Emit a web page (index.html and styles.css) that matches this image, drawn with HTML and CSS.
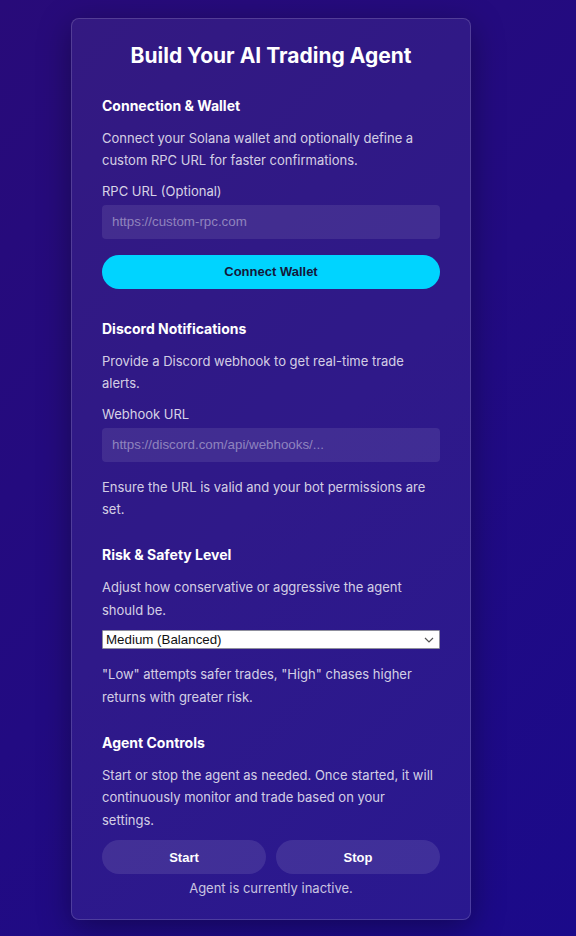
FILE: index.html
```html
<!DOCTYPE html>
<html lang="en">
<head>
<meta charset="utf-8">
<title>Build Your AI Trading Agent</title>
<link rel="stylesheet" href="styles.css">
</head>
<body>
<div class="page">
  <div class="card">
    <h1 class="title">Build Your AI Trading Agent</h1>

    <section class="section">
      <h2 class="heading">Connection &amp; Wallet</h2>
      <p class="desc">Connect your Solana wallet and optionally define a custom RPC URL for faster confirmations.</p>
      <label class="label" for="rpc">RPC URL (Optional)</label>
      <input class="field" id="rpc" type="text" placeholder="https://custom-rpc.com">
      <button class="btn-connect" type="button">Connect Wallet</button>
    </section>

    <section class="section">
      <h2 class="heading">Discord Notifications</h2>
      <p class="desc">Provide a Discord webhook to get real-time trade alerts.</p>
      <label class="label" for="hook">Webhook URL</label>
      <input class="field" id="hook" type="text" placeholder="https://discord.com/api/webhooks/...">
      <p class="note">Ensure the URL is valid and your bot permissions are set.</p>
    </section>

    <section class="section">
      <h2 class="heading">Risk &amp; Safety Level</h2>
      <p class="desc">Adjust how conservative or aggressive the agent should be.</p>
      <select class="risk">
        <option>Low (Safer)</option>
        <option selected>Medium (Balanced)</option>
        <option>High (Aggressive)</option>
      </select>
      <p class="note">"Low" attempts safer trades, "High" chases higher returns with greater risk.</p>
    </section>

    <section class="section last">
      <h2 class="heading">Agent Controls</h2>
      <p class="desc">Start or stop the agent as needed. Once started, it will continuously monitor and trade based on your settings.</p>
      <div class="controls">
        <button class="btn-ctrl" type="button">Start</button>
        <button class="btn-ctrl" type="button">Stop</button>
      </div>
      <p class="status">Agent is currently inactive.</p>
    </section>
  </div>
</div>
</body>
</html>
```
FILE: styles.css
```css
html, body {
  margin: 0;
  padding: 0;
}
body {
  min-height: 936px;
  background: linear-gradient(135deg, #280b79 0%, #220b82 50%, #1b0a8a 100%);
  font-family: Inter, "Noto Sans", sans-serif;
  color: #fff;
}
.page {
  padding: 18px 0 14px 71px;
}
.card {
  box-sizing: border-box;
  display: flex;
  flex-direction: column;
  width: 400px;
  padding: 25px 30px 21px;
  border: 1px solid rgba(255, 255, 255, 0.16);
  border-radius: 8px;
  background: rgba(255, 255, 255, 0.06);
  box-shadow: 0 8px 32px rgba(0, 0, 0, 0.35);
}
.title {
  margin: 0 0 29px;
  font-size: 21px;
  line-height: 24px;
  font-weight: 700;
  text-align: center;
  color: #fff;
}
.section {
  margin-bottom: 26px;
}
.section.last {
  margin-bottom: 0;
}
.heading {
  margin: 0 0 12px;
  font-size: 14px;
  line-height: 18px;
  font-weight: 700;
  color: #fff;
}
.desc, .note {
  margin: 0 0 9px;
  font-size: 13px;
  line-height: 22.4px;
  color: rgba(255, 255, 255, 0.8);
}
.note {
  margin: 14px 0 0;
}
.label {
  display: block;
  margin-bottom: 4px;
  font-size: 13px;
  line-height: 20px;
  color: rgba(255, 255, 255, 0.82);
}
.field {
  display: block;
  box-sizing: border-box;
  width: 100%;
  height: 34px;
  padding: 0 10px;
  border: none;
  border-radius: 4px;
  background: rgba(255, 255, 255, 0.09);
  color: #fff;
  font-family: "Liberation Sans", Arial, sans-serif;
  font-size: 13.33px;
  outline: none;
}
.field::placeholder {
  color: rgba(255, 255, 255, 0.42);
}
.btn-connect {
  display: block;
  width: 100%;
  height: 34px;
  margin: 16px 0 5px;
  border: none;
  border-radius: 17px;
  background: #00d4ff;
  color: #14183a;
  font-family: "Liberation Sans", Arial, sans-serif;
  font-size: 13px;
  font-weight: 700;
  cursor: pointer;
}
.risk {
  display: block;
  box-sizing: border-box;
  width: 100%;
  height: 19px;
  margin-top: 1px;
  padding: 0 20px 0 3px;
  border: 1px solid #8f8f9d;
  border-radius: 1px;
  background-color: #fff;
  background-image: url("data:image/svg+xml,%3Csvg xmlns='http://www.w3.org/2000/svg' width='10' height='6' viewBox='0 0 10 6'%3E%3Cpath d='M1 1l4 4 4-4' fill='none' stroke='%23555' stroke-width='1.2'/%3E%3C/svg%3E");
  background-repeat: no-repeat;
  background-position: right 5px center;
  -webkit-appearance: none;
  appearance: none;
  color: #111;
  font-family: "Liberation Sans", Arial, sans-serif;
  font-size: 13.33px;
  line-height: 17px;
}
.controls {
  display: flex;
  gap: 10px;
}
.btn-ctrl {
  flex: 1;
  height: 34px;
  border: none;
  border-radius: 17px;
  background: rgba(255, 255, 255, 0.1);
  color: #fff;
  font-family: "Liberation Sans", Arial, sans-serif;
  font-size: 13px;
  font-weight: 700;
  cursor: pointer;
}
.status {
  margin: 4px 0 0;
  font-size: 13px;
  line-height: 20px;
  text-align: center;
  color: rgba(255, 255, 255, 0.75);
}
```
